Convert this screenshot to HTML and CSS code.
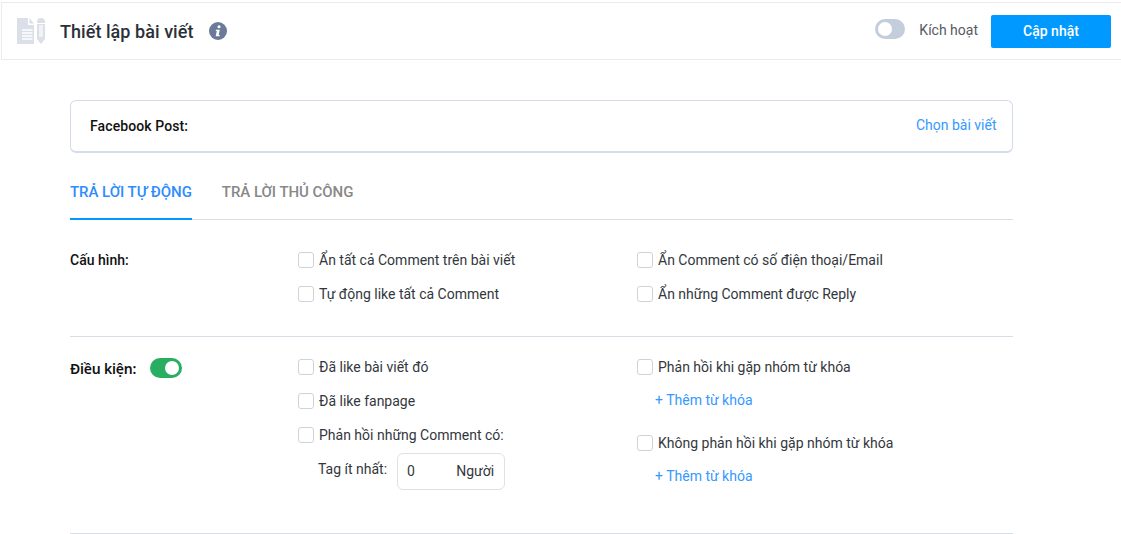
FILE: index.html
```html
<!DOCTYPE html>
<html lang="vi">
<head>
<meta charset="utf-8">
<title>Thiết lập bài viết</title>
<link rel="stylesheet" href="styles.css">
</head>
<body>
<header class="topbar">
  <div class="topbar-left">
    <svg class="page-icon" width="28" height="26" viewBox="0 0 28 26"><path fill="#dadfe8" d="M0 0h11v7h6v19H0z"/><path fill="#dadfe8" d="M12.500 0l4.500 5.500h-4.500z"/><path stroke="#fff" stroke-width="1.300" d="M5 12h10.500M5 15h10.500M5 18h10.500M5 21h10.500"/><path fill="#dadfe8" d="M20 4q0-4 4-4t4 4v17l-4 5-4-5z"/><path stroke="#fff" stroke-width="1.200" d="M23 7v12M25 7v12M20 5.500h8"/></svg>
    <h1 class="title">Thiết lập bài viết</h1>
    <span class="info"><svg width="18" height="18" viewBox="0 0 18 18"><circle cx="9" cy="9" r="9" fill="#6b7a99"/><circle cx="10" cy="4.800" r="1.500" fill="#fff"/><path fill="#fff" d="M7 7.800h3.800l-1.100 5.200h1.100l-.3 1.300H6.700l1.100-5.200H6.700z"/></svg></span>
  </div>
  <div class="topbar-right">
    <span class="toggle toggle-off"></span>
    <span class="activate">Kích hoạt</span>
    <button class="update">Cập nhật</button>
  </div>
</header>
<main class="content">
  <section class="post-box">
    <strong>Facebook Post:</strong>
    <a class="link">Chọn bài viết</a>
  </section>
  <nav class="tabs">
    <span class="tab active">TRẢ LỜI TỰ ĐỘNG</span>
    <span class="tab">TRẢ LỜI THỦ CÔNG</span>
  </nav>
  <section class="row row-config">
    <div class="row-label"><strong>Cấu hình:</strong></div>
    <div class="col col-a">
      <label class="check"><i></i>Ẩn tất cả Comment trên bài viết</label>
      <label class="check"><i></i>Tự động like tất cả Comment</label>
    </div>
    <div class="col">
      <label class="check"><i></i>Ẩn Comment có số điện thoại/Email</label>
      <label class="check"><i></i>Ẩn những Comment được Reply</label>
    </div>
  </section>
  <section class="row row-cond">
    <div class="row-label"><strong>Điều kiện:</strong><span class="toggle toggle-on"></span></div>
    <div class="col col-a">
      <label class="check"><i></i>Đã like bài viết đó</label>
      <label class="check"><i></i>Đã like fanpage</label>
      <label class="check"><i></i>Phản hồi những Comment có:</label>
      <div class="tag-row">
        <span>Tag ít nhất:</span>
        <div class="tag-input"><span>0</span><span>Người</span></div>
      </div>
    </div>
    <div class="col">
      <label class="check"><i></i>Phản hồi khi gặp nhóm từ khóa</label>
      <a class="link add">+ Thêm từ khóa</a>
      <label class="check"><i></i>Không phản hồi khi gặp nhóm từ khóa</label>
      <a class="link add">+ Thêm từ khóa</a>
    </div>
  </section>
</main>
</body>
</html>
```
FILE: styles.css
```css
* { box-sizing: border-box; }
html, body { margin: 0; padding: 0; background: #fff; overflow: hidden; }
body { font-family: Roboto, "Liberation Sans", sans-serif; font-size: 14px; color: #33373d; height: 534px; }
.topbar { margin: 2px 0 0 1px; height: 58px; border: 1px solid #e9ebf0; border-right: 0; display: flex; align-items: center; justify-content: space-between; padding: 0 10px 0 15px; }
.topbar-left, .topbar-right { display: flex; align-items: center; }
.page-icon { display: block; }
.title { margin: 2px 0 0 15px; font-size: 18px; font-weight: 500; color: #2b2f38; line-height: 24px; letter-spacing: .05px; }
.info { margin-left: 16px; display: flex; }
.toggle { display: inline-block; height: 20px; border-radius: 10px; position: relative; }
.toggle::after { content: ""; position: absolute; top: 3px; width: 14px; height: 14px; border-radius: 50%; background: #fff; }
.toggle-off { background: #c3cddc; width: 30px; margin-bottom: 4px; }
.toggle-off::after { left: 3px; }
.toggle-on { background: #27ae60; width: 32px; margin-top: 7px; }
.toggle-on::after { right: 3px; }
.activate { margin: 0 13px 2px 14px; color: #555a63; }
.update { width: 120px; height: 33px; border: 0; border-radius: 2px; background: #0099ff; color: #fff; font: 500 14px Roboto, sans-serif; padding: 0; }
.content { width: 943px; margin-left: 70px; padding-top: 40px; }
.post-box { height: 53px; border: 1px solid #d3dce8; border-bottom-width: 2px; border-radius: 6px; display: flex; align-items: center; justify-content: space-between; padding: 0 15px 2px 19px; }
.post-box strong { color: #111; font-weight: 500; margin-top: 2px; letter-spacing: .1px; }
.post-box .link { margin-right: .5px; }
.link { color: #3399ff; }
.tabs { display: flex; gap: 30px; height: 67px; border-bottom: 1px solid #d8dee6; }
.tab { font-size: 15px; font-weight: 500; color: #888; padding-top: 30px; height: 67px; letter-spacing: -.05px; }
.tab.active { color: #2d8cff; border-bottom: 2px solid #0099ff; }
.row { display: flex; border-bottom: 1px solid #d8dee6; }
.row-config { height: 117px; padding-top: 23px; }
.row-cond { height: 197px; padding-top: 13px; }
.row-label { width: 228px; display: flex; align-items: flex-start; gap: 13px; line-height: 34px; }
.row-label strong { font-weight: 500; color: #111; }
.row-cond .row-label { padding-top: 1px; }
.row-cond .row-label strong { font-family: "Noto Sans", Roboto, sans-serif; font-weight: 600; letter-spacing: -.2px; width: 67px; margin-top: 1px; white-space: nowrap; }
.row-cond .toggle { margin-top: 7px; }
.col { display: flex; flex-direction: column; align-items: flex-start; }
.col-a { width: 339px; }
.check { display: flex; align-items: center; height: 34px; }
.check i { width: 16px; height: 16px; margin-right: 5px; border: 1px solid #cfd3d8; border-radius: 3px; background: #fff; }
.add { display: block; height: 42px; line-height: 32px; margin-left: 18px; }
.tag-row { display: flex; align-items: flex-start; gap: 10px; margin: 1px 0 0 20px; line-height: 32px; }
.tag-input { width: 108px; height: 37px; border: 1px solid #dfe1e5; border-radius: 6px; display: flex; justify-content: space-between; align-items: center; padding: 0 10px 2px 9px; }
```
